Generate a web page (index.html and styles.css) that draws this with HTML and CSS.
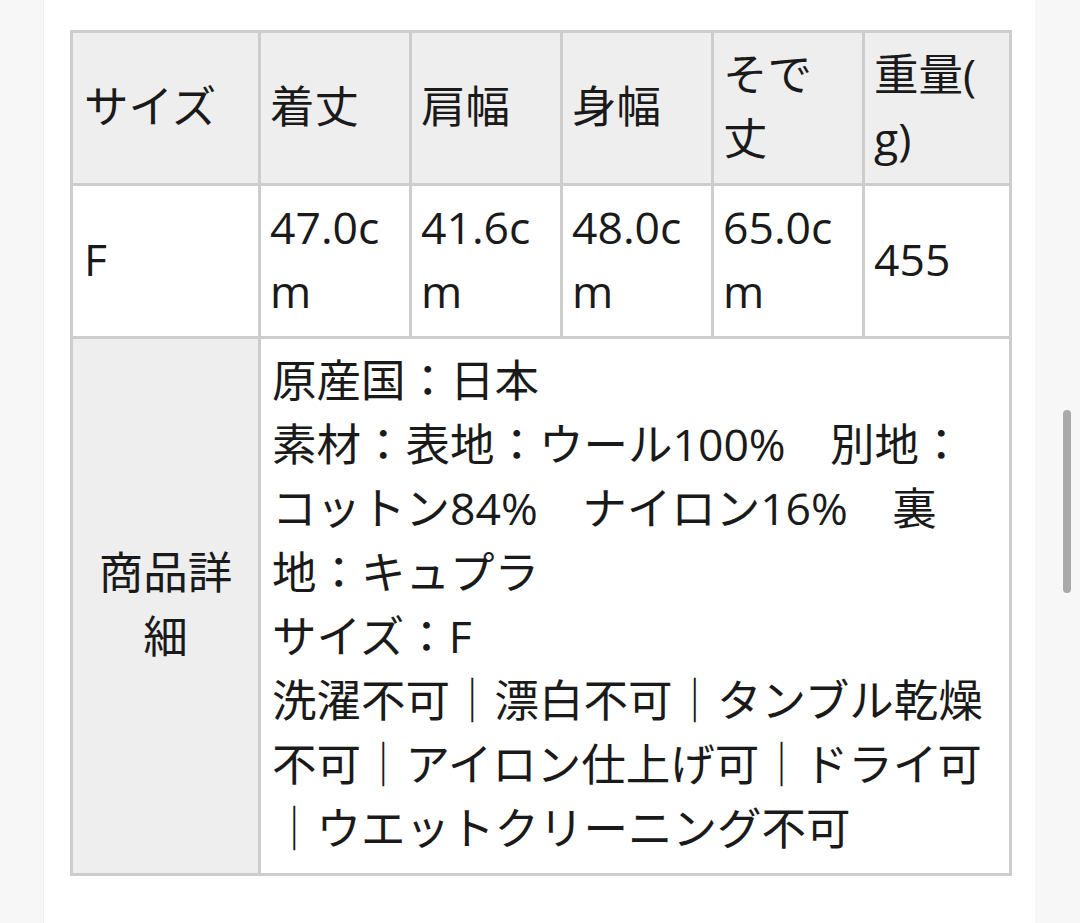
FILE: index.html
```html
<!DOCTYPE html>
<html lang="ja">
<head>
<meta charset="utf-8">
<link rel="stylesheet" href="styles.css">
</head>
<body>
<div class="page">
  <div class="content">
    <table class="spec">
      <colgroup>
        <col class="c-first">
        <col class="c-mid">
        <col class="c-mid">
        <col class="c-mid">
        <col class="c-mid">
        <col class="c-last">
      </colgroup>
      <tr class="head">
        <th class="first">サイズ</th>
        <th>着丈</th>
        <th>肩幅</th>
        <th>身幅</th>
        <th>そで丈</th>
        <th>重量(g)</th>
      </tr>
      <tr class="vals">
        <td class="first">F</td>
        <td>47.0cm</td>
        <td>41.6cm</td>
        <td>48.0cm</td>
        <td>65.0cm</td>
        <td>455</td>
      </tr>
      <tr>
        <th class="label">商品詳細</th>
        <td colspan="5" class="detail">原産国：日本<br>素材：表地：ウール100%　別地：コットン84%　ナイロン16%　裏地：キュプラ<br>サイズ：F<br>洗濯不可｜漂白不可｜タンブル乾燥不可｜アイロン仕上げ可｜ドライ可｜ウエットクリーニング不可</td>
      </tr>
    </table>
  </div>
  <div class="scroll-thumb"></div>
</div>
</body>
</html>
```

FILE: styles.css
```css
html, body {
  margin: 0;
  padding: 0;
  background: #f7f7f7;
}

.page {
  width: 1080px;
  height: 923px;
  overflow: hidden;
  position: relative;
}

.content {
  margin-left: 43px;
  width: 992px;
  height: 923px;
  box-sizing: border-box;
  background: #ffffff;
  border-left: 1px solid #efefef;
  padding: 30px 0 0 26px;
}

.spec {
  border-collapse: collapse;
  table-layout: fixed;
  width: 939px;
  font-family: "Open Sans", "Noto Sans CJK JP", sans-serif;
  font-size: 44.5px;
  line-height: 64px;
  color: #1a1a1a;
  word-break: break-all;
}

.c-first { width: 188px; }
.c-mid { width: 151px; }
.c-last { width: 147px; }

.spec th,
.spec td {
  border: 3px solid #cdcdcd;
  padding: 9px 11px 13px 9px;
  text-align: left;
  vertical-align: middle;
  font-weight: normal;
}

.spec .head th,
.spec .vals td {
  line-break: anywhere;
}

.spec .first {
  padding-left: 11px;
}

.spec .head th {
  background: #eeeeee;
}

.spec td {
  background: #ffffff;
}

.spec th.label {
  background: #eeeeee;
  text-align: center;
  padding-left: 9px;
  padding-right: 9px;
}

.spec td.detail {
  padding-left: 11px;
}

.scroll-thumb {
  position: absolute;
  left: 1063px;
  top: 410px;
  width: 8px;
  height: 183px;
  border-radius: 4px;
  background: #a9a9a9;
}
```
